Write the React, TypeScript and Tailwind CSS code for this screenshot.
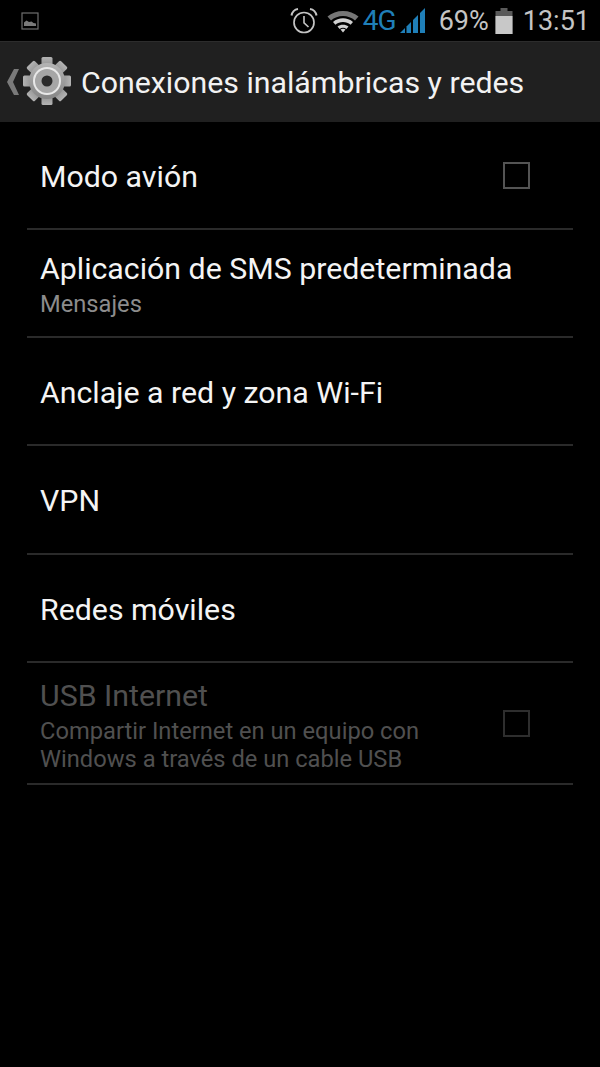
import { ReactNode } from "react"

function AlarmIcon() {
  return (
    <svg width="28" height="28" viewBox="0 0 28 28" fill="none" stroke="#c4c4c4" className="shrink-0">
      <circle cx="14" cy="15.5" r="10" strokeWidth="1.7" />
      <path d="M14 9V15.8L18.5 20" strokeWidth="1.6" />
      <path d="M1.5 8.5C2 5.5 4.5 2.5 8 2" strokeWidth="2" />
      <path d="M26.5 8.5C26 5.5 23.5 2.5 20 2" strokeWidth="2" />
    </svg>
  )
}

function WifiIcon() {
  return (
    <svg width="32" height="24" viewBox="0 0 32 24" className="shrink-0">
      <path d="M0.5 7.5C8.5 0 23.5 0 31.5 7.5L28 11.5C21.5 5.5 10.5 5.5 4 11.5Z" fill="#767676" />
      <path d="M6 13C11.5 8 20.5 8 26 13L23.6 15.8C19.5 12 12.5 12 8.4 15.8Z" fill="#d0d0d0" />
      <path d="M10.5 17.6C13.5 15 18.5 15 21.5 17.6L19.4 20C17.5 18.4 14.5 18.4 12.6 20Z" fill="#d0d0d0" />
      <path d="M13.5 20.6C15 19.6 17 19.6 18.5 20.6L16 23.5Z" fill="#d0d0d0" />
    </svg>
  )
}

function SignalIcon() {
  return (
    <svg width="27" height="26" viewBox="0 0 27 26" fill="#1f7fb8" className="shrink-0">
      <path d="M0 25L5 20V25Z" />
      <path d="M6.5 18.5L11 14V25H6.5Z" />
      <path d="M13 12L18 7V25H13Z" />
      <path d="M20 5L25 0V25H20Z" />
    </svg>
  )
}

function BatteryIcon() {
  return (
    <svg width="18" height="26" viewBox="0 0 18 26" className="shrink-0">
      <path d="M5.5 0H12.5V3H17.5V26H0.5V3H5.5Z" fill="#5a5a5a" />
      <rect x="0.5" y="8" width="17" height="18" fill="#c8c8c8" />
    </svg>
  )
}

function PictureIcon() {
  return (
    <svg width="18" height="18" viewBox="0 0 18 18" fill="none">
      <rect x="1" y="1" width="16" height="16" stroke="#6e6e6e" strokeWidth="1.2" />
      <path d="M3 14V10.5L5.5 8.5L8 10L10.5 9.5L12.5 11L15 11.5V14Z" fill="#7a7a7a" />
    </svg>
  )
}

function GearIcon() {
  const teeth = [0, 45, 90, 135, 180, 225, 270, 315]
  return (
    <svg width="48" height="50" viewBox="0 0 48 50" className="shrink-0">
      <defs>
        <linearGradient id="gearFill" x1="0" y1="0" x2="0" y2="1">
          <stop offset="0" stopColor="#b4b4b4" />
          <stop offset="1" stopColor="#868686" />
        </linearGradient>
      </defs>
      <g fill="url(#gearFill)">
        {teeth.map((a) => (
          <rect key={a} x="18.5" y="1" width="11" height="12" rx="1.5" transform={`rotate(${a} 24 25)`} />
        ))}
        <circle cx="24" cy="25" r="18" />
      </g>
      <circle cx="24" cy="25" r="14" fill="#e8e8e8" />
      <circle cx="24" cy="25" r="12" fill="#a6a6a6" />
      <circle cx="24" cy="25" r="5.5" fill="#2b2b2b" />
    </svg>
  )
}

function Checkbox({ disabled }: { disabled?: boolean }) {
  return (
    <div
      className={`w-[27px] h-[27px] border-2 shrink-0 ${disabled ? "border-[#2e2e2e]" : "border-[#545454]"}`}
    />
  )
}

function Row({
  title,
  summary,
  check,
  disabled,
  className,
}: {
  title: string
  summary?: ReactNode
  check?: boolean
  disabled?: boolean
  className: string
}) {
  return (
    <div className={`flex items-center justify-between border-b-2 border-[#2a2a2a] pl-[13px] pr-[43px] ${className}`}>
      <div className="min-w-0 pt-[3px]">
        <div className={`text-[30.3px] leading-[38px] ${disabled ? "text-[#505050]" : "text-[#f4f4f4]"}`}>{title}</div>
        {summary && (
          <div className={`mt-[2px] text-[23.7px] leading-[28px] ${disabled ? "text-[#505050]" : "text-[#8c8c8c]"}`}>{summary}</div>
        )}
      </div>
      {check && <Checkbox disabled={disabled} />}
    </div>
  )
}

export default function App() {
  return (
    <div className="w-[600px] h-[1067px] bg-black overflow-hidden font-['Roboto',sans-serif]">
      {/* Status bar */}
      <div className="h-[41px] flex items-center pt-[1px] pl-[21px] pr-[10px]">
        <PictureIcon />
        <div className="ml-auto flex items-center">
          <AlarmIcon />
          <div className="ml-[9px]"><WifiIcon /></div>
          <span className="ml-[4px] text-[#1f7fb8] text-[28px] leading-none tracking-[-1px]">4G</span>
          <div className="ml-[4px]"><SignalIcon /></div>
          <span className="ml-[12px] text-[#c4c4c4] text-[27px] leading-none">69%</span>
          <div className="ml-[6px]"><BatteryIcon /></div>
          <span className="ml-[10px] text-[#c4c4c4] text-[27px] leading-none">13:51</span>
        </div>
      </div>

      {/* Action bar */}
      <div className="h-[81px] bg-[#202020] border-t border-[#2c2c2c] flex items-center pl-[7px]">
        <svg width="12" height="26" viewBox="0 0 12 26" className="shrink-0">
          <path d="M7 0H12L6 13L12 26H7L0 13Z" fill="#7a7a7a" />
        </svg>
        <div className="ml-[4px] pb-[2px]"><GearIcon /></div>
        <span className="ml-[10px] pt-[2px] text-[30.3px] text-[#f2f2f2] whitespace-nowrap">Conexiones inalámbricas y redes</span>
      </div>

      {/* List */}
      <div className="mx-[27px]">
        <Row title="Modo avión" check className="h-[108px]" />
        <Row title="Aplicación de SMS predeterminada" summary="Mensajes" className="h-[108px] pb-[2px]" />
        <Row title="Anclaje a red y zona Wi-Fi" className="h-[108px]" />
        <Row title="VPN" className="h-[109px]" />
        <Row title="Redes móviles" className="h-[108px]" />
        <Row
          title="USB Internet"
          summary={
            <>
              Compartir Internet en un equipo con
              <br />
              Windows a través de un cable USB
            </>
          }
          check
          disabled
          className="h-[122px]"
        />
      </div>
    </div>
  )
}
